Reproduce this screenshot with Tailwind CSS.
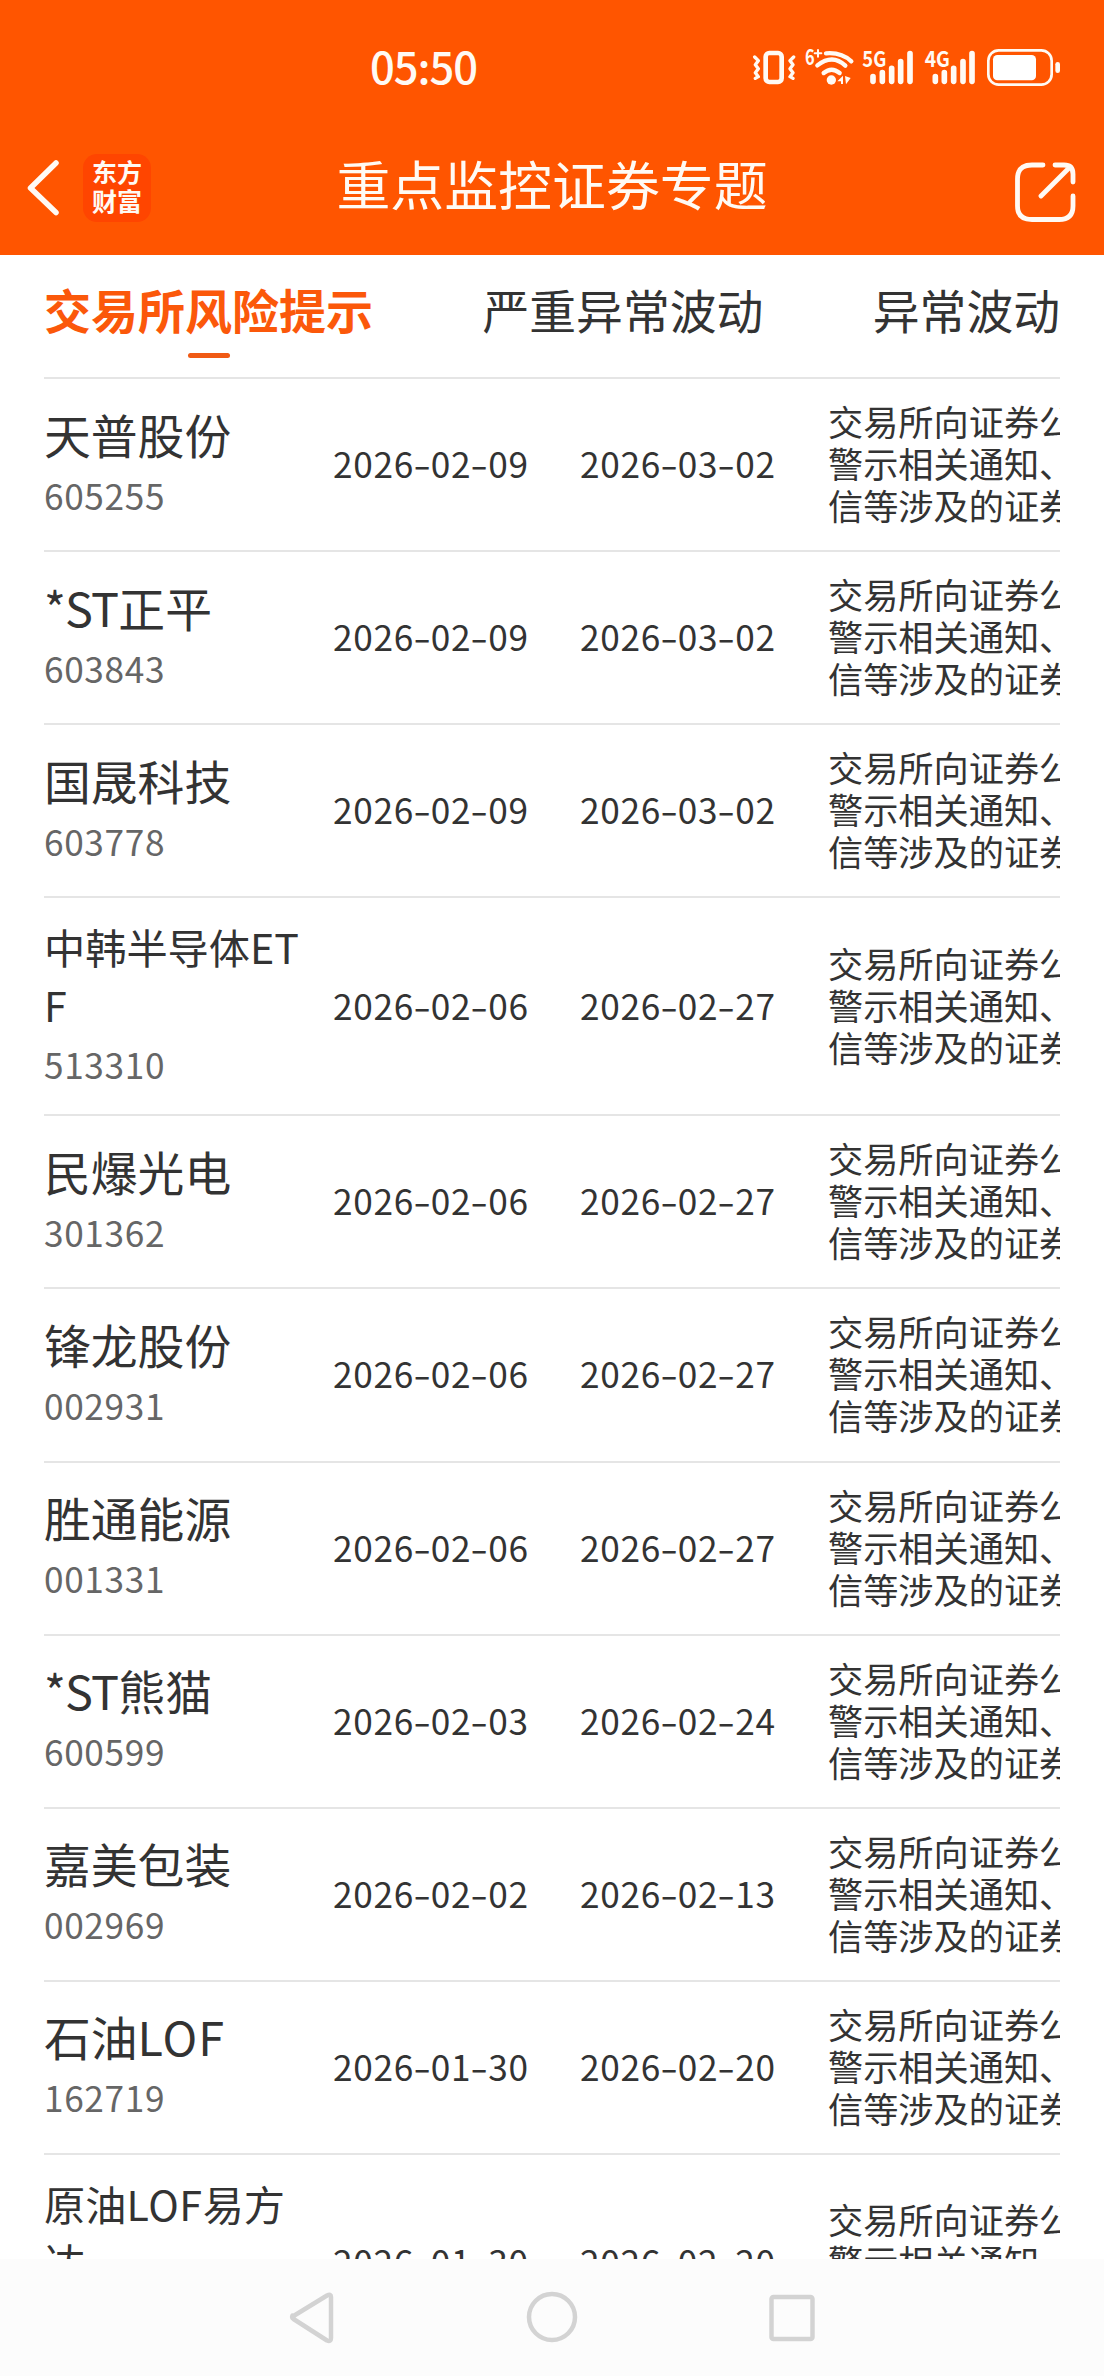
<!DOCTYPE html>
<html lang="zh-CN">
<head>
<meta charset="utf-8">
<title>重点监控证券专题</title>
<script src="https://cdn.jsdelivr.net/npm/@tailwindcss/browser@4"></script>
</head>
<body class="bg-white">
<div class="flex h-[2376px] w-[1104px] flex-col overflow-hidden bg-white font-['Noto_Sans_CJK_SC',sans-serif] text-[#333333]">
  <header class="h-[255px] shrink-0 bg-[#ff5500] text-[#fffaf4]">
    <div class="flex h-[134px] items-start justify-between pl-[370px]">
      <div class="mt-[34px] text-[43.500px] leading-[64px] font-medium tracking-[-1px]">05:50</div>
      <svg class="mt-[30px] h-[80px] w-[384px]" viewBox="0 0 1152 240" fill="none" stroke="currentColor" stroke-linecap="round" stroke-linejoin="round">
        <rect x="137" y="69" width="48" height="87" rx="11" stroke-width="14"/>
        <path d="M104 81l11 11-9 12 9 12-9 12 9 12-9 5M221 81l-11 11 9 12-9 12 9 12-9 12 9 5" stroke-width="10"/>
        <path d="M318 70q46 -4 76 24M292 106q46 -36 84 1M311 129q24 -20 48 0" stroke-width="13"/>
        <circle cx="334" cy="150" r="14" fill="currentColor" stroke="none"/>
        <path d="M352 154l17-17v25h-6v-8zM375 138l17 6-14 19z" fill="currentColor" stroke="none"/>
        <g fill="currentColor" stroke="none" class="font-['Noto_Sans_CJK_SC',sans-serif] font-bold">
          <text x="255" y="105" font-size="62" textLength="29" lengthAdjust="spacingAndGlyphs">6</text>
          <text x="427" y="111" font-size="65" textLength="72" lengthAdjust="spacingAndGlyphs">5G</text>
          <text x="614" y="111" font-size="65" textLength="76" lengthAdjust="spacingAndGlyphs">4G</text>
        </g>
        <path d="M294 60v20M284 70h20" stroke-width="6"/>
        <path d="M459 140v14M487 128v26M515 115v39M542 95v59M570 71v83M646 140v14M673 128v26M701 115v39M729 95v59M756 71v83" stroke-width="17"/>
        <rect x="805" y="61" width="190" height="103" rx="31" stroke-width="8"/>
        <rect x="819" y="75" width="129" height="76" rx="13" fill="#ffffff" stroke="none"/>
        <rect x="1006" y="96" width="14" height="33" rx="7" fill="currentColor" stroke="none"/>
      </svg>
    </div>
    <div class="grid h-[107px] grid-cols-[1fr_auto_1fr] items-center">
      <div class="flex items-center">
        <svg class="ml-[24px] h-[60px] w-[36px]" viewBox="0 0 36 60" fill="none" stroke="currentColor" stroke-width="5.5" stroke-linecap="round" stroke-linejoin="round"><path d="M32 5L6.500 30L32 54.500"/></svg>
        <div class="ml-[23px] flex h-[68px] w-[68px] flex-col items-center justify-center rounded-[14px] bg-[#ff4500] pb-[4px] text-[25px] leading-[29px] font-bold"><span>东方</span><span>财富</span></div>
      </div>
      <h1 class="-mt-[9px] text-[53.900px] leading-[80px] font-normal">重点监控证券专题</h1>
      <svg class="mt-[7px] mr-[28px] h-[64px] w-[64px] justify-self-end" viewBox="0 0 64 64" fill="none" stroke="currentColor" stroke-width="4.800" stroke-linecap="round" stroke-linejoin="round"><path d="M31 6H20Q5.500 6 5.500 20V47Q5.500 60.500 20 60.500H47Q61 60.500 61 47V37M43 6H52Q61 6 61 15V23M29 37L58 8"/></svg>
    </div>
  </header>

  <main class="flex min-h-0 flex-1 flex-col overflow-hidden px-[44px]">
    <nav class="flex h-[124px] shrink-0 items-start justify-between border-b-2 border-[#e5e5e5] pt-[19px] text-[46.800px] leading-[70px]">
      <div class="flex flex-col items-center text-[47px] font-bold text-[#fb580a]">交易所风险提示<span class="mt-[9px] h-[5px] w-[42px] rounded-full bg-[#f05a14]"></span></div>
      <div>严重异常波动</div>
      <div>异常波动</div>
    </nav>
    <div id="list" class="shrink-0"></div>
  </main>

  <footer class="h-[117px] shrink-0 bg-[#fcfcfc]">
    <svg class="h-[117px] w-full" viewBox="0 0 1104 117" fill="none" stroke="#d3d3d3" stroke-width="4.500" stroke-linejoin="round">
      <path d="M292.500 56.500Q291.500 58.500 293.500 60L327 81.500Q331 83 331 79V38Q331 34.500 327 36.500L293.500 57Z"/>
      <circle cx="552" cy="58" r="23"/>
      <rect x="771.500" y="38" width="41" height="42" rx="2"/>
    </svg>
  </footer>
</div>
<script>
const st = '<span class="tracking-[-0.8px]">*ST</span>';
const rows = [
  ['天普股份', '605255', '2026-02-09', '2026-03-02'],
  [st + '正平', '603843', '2026-02-09', '2026-03-02'],
  ['国晟科技', '603778', '2026-02-09', '2026-03-02'],
  ['中韩半导体ET<br>F', '513310', '2026-02-06', '2026-02-27', true],
  ['民爆光电', '301362', '2026-02-06', '2026-02-27'],
  ['锋龙股份', '002931', '2026-02-06', '2026-02-27'],
  ['胜通能源', '001331', '2026-02-06', '2026-02-27'],
  [st + '熊猫', '600599', '2026-02-03', '2026-02-24'],
  ['嘉美包装', '002969', '2026-02-02', '2026-02-13'],
  ['石油<span class="tracking-[0.9px]">LOF</span>', '162719', '2026-01-30', '2026-02-20'],
  ['原油<span class="tracking-[0.6px]">LOF</span>易方<br>达', '&nbsp;', '2026-01-30', '2026-02-20', true],
];
const date = d => `<div class="pb-[3px] text-[35.2px] leading-[42px] tracking-[0.68px] whitespace-nowrap">${d.replaceAll('-', '<span class="inline-block w-[17px] scale-x-145 text-center">-</span>')}</div>`;
document.getElementById('list').innerHTML = rows.map(([name, code, from, to, long]) => `
  <div class="grid grid-cols-[289px_247px_248px_232px] items-center overflow-hidden border-b-2 border-[#e5e5e5] ${long ? 'h-[218px]' : 'h-[173.12px]'}">
    <div class="${long ? 'pb-[1px]' : 'pb-[6px]'}">
      <div class="whitespace-nowrap ${long ? 'text-[41.2px] leading-[58px]' : 'text-[46.8px] leading-[65px]'}">${name}</div>
      <div class="text-[35.2px] tracking-[0.65px] text-[#666666] ${long ? 'leading-[61px]' : 'leading-[57px]'}">${code}</div>
    </div>
    ${date(from)}
    ${date(to)}
    <div class="overflow-hidden pb-[3px] text-[35.2px] leading-[42px] whitespace-nowrap">交易所向证券公<br>警示相关通知、<br>信等涉及的证券</div>
  </div>`).join('');
</script>
</body>
</html>
